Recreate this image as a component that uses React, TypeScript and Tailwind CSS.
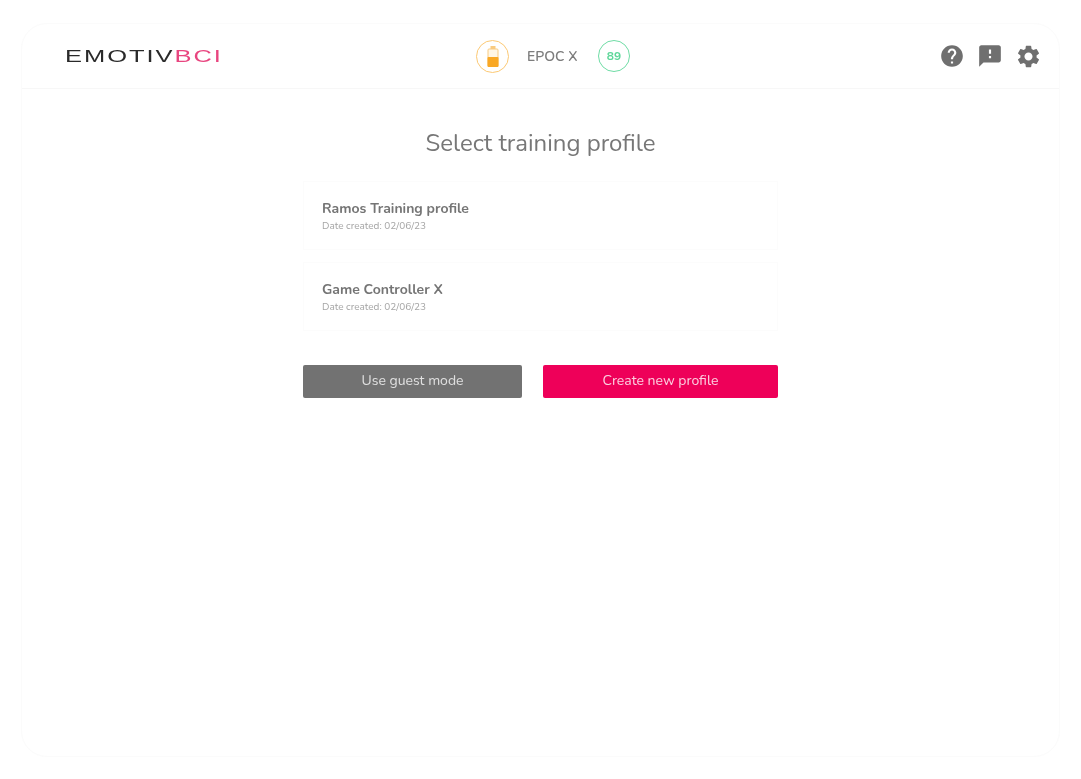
import { MdFeedback, MdHelp, MdSettings } from 'react-icons/md';

const profiles = [
  { name: 'Ramos Training profile', created: '02/06/23' },
  { name: 'Game Controller X', created: '02/06/23' },
];

function BatteryIcon() {
  return (
    <svg width="12" height="21" viewBox="0 0 12 21" fill="none">
      <rect x="3.5" y="0" width="5" height="3" fill="#f9cb80" />
      <rect x="1" y="3" width="10" height="17.5" rx="1" fill="#fff6e6" stroke="#f9cb80" />
      <rect x="0.5" y="11" width="11" height="10" rx="1" fill="#f9a825" />
    </svg>
  );
}

export default function App() {
  return (
    <div className="min-h-[779px] bg-white px-[21px] pt-[23px] font-['Nunito','Lato','Noto_Sans',sans-serif] blur-[0.5px]">
      <div className="h-[734px] w-[1039px] rounded-[26px] border border-[#fbfbfb] bg-white">
        <header className="flex h-[65px] items-center border-b border-[#f7f7f7] pl-[43px] pr-[17px]">
          <div className="flex w-[155px] origin-left scale-x-[1.5] font-['Liberation_Sans',sans-serif] text-[17px] leading-none tracking-[1.3px]">
            <span className="text-[#2a2a2a]">EMOTIV</span>
            <span className="text-[#e8457f]">BCI</span>
          </div>
          <div className="ml-[256px] flex items-center">
            <div className="flex size-[33px] items-center justify-center rounded-full border border-[#fcc974]">
              <BatteryIcon />
            </div>
            <span className="ml-[18px] w-[53px] text-[14px] font-semibold text-[#7d7d7d]">EPOC X</span>
            <div className="ml-[18px] flex size-[32px] items-center justify-center rounded-full border border-[#6fdca5] text-[12px] font-bold text-[#5fd79a]">
              89
            </div>
          </div>
          <div className="ml-auto flex items-center gap-[12px] text-[#6f6f6f]">
            <MdHelp size={26} />
            <MdFeedback size={26} />
            <MdSettings size={27} />
          </div>
        </header>

        <main className="flex flex-col items-center">
          <h1 className="mt-[36px] text-[24px] leading-[36px] text-[#777777]">Select training profile</h1>

          <div className="mt-[20px] flex w-[475px] flex-col gap-[12px]">
            {profiles.map((p) => (
              <div key={p.name} className="h-[69px] border border-[#fcfcfc] pl-[18px] pt-[17px]">
                <div className="text-[14px] font-bold leading-[20px] text-[#757575]">{p.name}</div>
                <div className="text-[10px] leading-[14px] text-[#a5a5a5]">Date created: {p.created}</div>
              </div>
            ))}
          </div>

          <div className="mt-[34px] flex w-[475px] justify-between">
            <button className="h-[33px] w-[219px] rounded-[2px] bg-[#727272] pb-[2px] text-[14px] text-[#e0e0e0]">
              Use guest mode
            </button>
            <button className="h-[33px] w-[235px] rounded-[2px] bg-[#ee0059] pb-[2px] text-[14px] text-[#fbd0e0]">
              Create new profile
            </button>
          </div>
        </main>
      </div>
    </div>
  );
}
